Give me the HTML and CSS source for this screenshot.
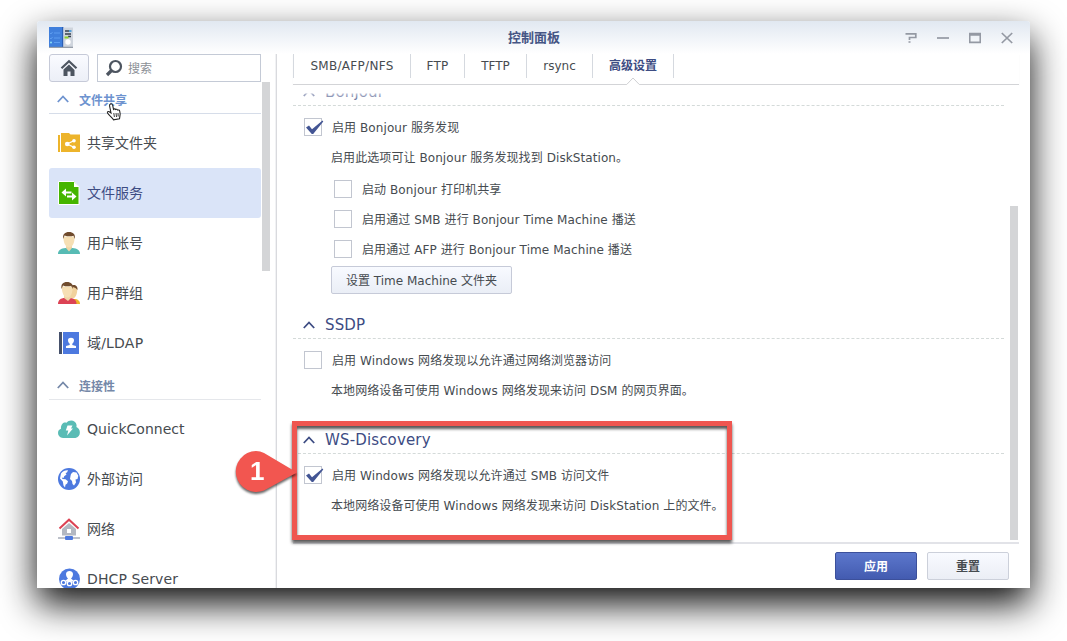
FILE: index.html
```html
<!DOCTYPE html>
<html lang="zh-CN">
<head>
<meta charset="utf-8">
<title>控制面板</title>
<link rel="stylesheet" href="styles.css">
</head>
<body>
<div class="window">
  <header class="titlebar">
    <svg class="app-icon" width="24" height="21" viewBox="0 0 24 21">
      <rect width="14" height="20" fill="#3f7fdc"/><rect x="13" width="1.5" height="20" fill="#2b5fb5"/>
      <rect x="14.5" y=".5" width="9.500" height="19.500" fill="#cfd5dd"/>
      <path d="M1 6l1 1 1.500-2M5 6h6M1 11l1 1 1.500-2M5 11h6M5 15.500h6" stroke="#5d9df0" fill="none"/><circle cx="2" cy="15.500" r="1" fill="#8fe0f5"/>
      <path d="M16 4h4M16 7h6M19 9.500h3" stroke="#35404e" stroke-width="1.300"/><path d="M20 4h2.500" stroke="#2d8ed8" stroke-width="1.500"/><path d="M15.500 10.500h4" stroke="#8ed12b" stroke-width="2"/>
      <circle cx="19" cy="15" r="2.700" fill="#fff"/><path d="M0 20.300h24" stroke="#7d8794"/>
    </svg>
    <h1 class="title">控制面板</h1>
    <div class="controls">
      <svg width="12" height="12" viewBox="0 0 12 12"><path d="M.5 1.800h10.300v3.700H4.500V8M3.500 10h2" /></svg>
      <svg width="12" height="12" viewBox="0 0 12 12"><path d="M0 6h12"/></svg>
      <svg width="12" height="12" viewBox="0 0 12 12"><path d="M.7 1.700h10.600v8.600H.7zM0 3h12"/></svg>
      <svg width="12" height="12" viewBox="0 0 12 12"><path d="M.8 1l10.400 10M11.200 1L.8 11"/></svg>
    </div>
  </header>
  <div class="body">
    <aside class="sidebar">
      <div class="search-row">
        <button class="home"><svg width="18" height="18" viewBox="0 0 18 18"><path d="M1.500 9.300L9 2.300l7.500 7" fill="none" stroke="#4d5560" stroke-width="2.200"/><path d="M3.500 10.500L9 5.500l5.500 5.500V17h-4v-4.500h-3V17h-4z" fill="#4d5560"/></svg></button>
        <div class="search"><svg width="18" height="18" viewBox="0 0 18 18"><circle cx="10.500" cy="7.500" r="5.500" fill="none" stroke="#4d5560" stroke-width="2.200"/><path d="M6.500 11.500L2 16" stroke="#4d5560" stroke-width="3.200"/></svg><span class="lift">搜索</span></div>
      </div>
      <div class="nav-wrap">
        <nav class="nav">
          <h2 class="group group-hover"><svg class="chev" width="12" height="8" viewBox="0 0 12 8"><path d="M.8 7L6 1.500 11.200 7"/></svg>文件共享</h2>
          <a class="item"><svg width="22" height="22" viewBox="0 0 22 22"><path d="M0 3h2v17H0zM3 1h8l1.500 1.500H22V20H3z" fill="#edb42b"/><path d="M16.500 8.500l-7.500 3.500L16.500 15.500" fill="none" stroke="#fff" stroke-width="1.300"/><g fill="#fff"><circle cx="16" cy="8.700" r="1.800"/><circle cx="9.200" cy="12" r="2.300"/><circle cx="16" cy="15.300" r="1.800"/></g></svg><span class="lift">共享文件夹</span></a>
          <a class="item active"><svg width="22" height="24" viewBox="0 0 22 24"><path d="M.5.500h15.500l5 5.500v17.500H.5z" fill="#45b500" stroke="#fff"/><path d="M16 1v5h5z" fill="#fff"/><path d="M3.500 11.500L8 7.500v3h5.500v2H8v3zM18.500 15.500L14 11.500v3H9v2h5v3z" fill="#fff"/></svg><span class="lift">文件服务</span></a>
          <a class="item"><svg width="22" height="22" viewBox="0 0 22 22"><path d="M0 22c0-4 3-5.500 7.500-6h7c4.500.5 7.500 2 7.500 6z" fill="#57bbb4"/><path d="M8 12h6v4l-3 3.500L8 16z" fill="#efd5a6"/><path d="M5.500 4.500h11c.4 6-2 11-5.500 11s-5.900-5-5.500-11z" fill="#f6dfb4"/><path d="M5.200 7C4.500 2 7 0 11 0s6.600 2 5.800 7l-1.300-3.300c-3 1-6 .8-9-.2z" fill="#704b2d"/></svg><span class="lift">用户帐号</span></a>
          <a class="item"><svg width="22" height="22" viewBox="0 0 22 22"><path d="M16 22v-5c4 0 6 2 6 5z" fill="#edb42b"/><path d="M13 5h6c1 5-1 10-3 11h-3z" fill="#f1d29d"/><path d="M12 4c4-2 8-1 7.500 4l-2-2z" fill="#704b2d"/><path d="M0 22c0-4 3-6 6.500-6h6c3.500.5 6 2 6 6z" fill="#dc4254"/><path d="M6 12h7v4l-3 3-4-3z" fill="#efd5a6"/><path d="M4 4.500h10.500c.4 6-1.600 11-5.200 11S3.600 10.500 4 4.500z" fill="#f6dfb4"/><path d="M3.500 7C2.800 2 5 0 9 0s6.500 2 5.700 7l-1.400-3.300c-2.800 1-5.700.8-8.300-.2z" fill="#704b2d"/></svg><span class="lift">用户群组</span></a>
          <a class="item"><svg width="22" height="22" viewBox="0 0 22 22"><path d="M1 0h3v22H1z" fill="#46516b"/><path d="M5 0h16v22H5z" fill="#4d79df"/><path d="M10 8c0-3 6-3 6 0 0 2-.7 3-1.700 3.700V13l3.700 1v2H8v-2l3.700-1v-1.300C10.700 11 10 10 10 8z" fill="#fff"/></svg><span class="lift ls">域/LDAP</span></a>
          <h2 class="group"><svg class="chev" width="12" height="8" viewBox="0 0 12 8"><path d="M.8 7L6 1.500 11.200 7"/></svg>连接性</h2>
          <a class="item"><svg width="22" height="22" viewBox="0 0 22 22"><path d="M5 20c-6-.5-6.500-8-2-9.300C2.500 6 6 3.500 8.500 4.700c3-4 9.500-2.500 10 2 .2 1 0 1.600-.1 2.300 5 2 4.500 10.500-1 11z" fill="#5abcb5"/><path d="M9.500 7.500h5l-1.500 3h2L9 17.500l1.300-5H7.800z" fill="#fff"/></svg>QuickConnect</a>
          <a class="item"><svg width="22" height="22" viewBox="0 0 22 22"><circle cx="11" cy="11" r="11" fill="#4d79df"/><path d="M3 5.500C5 3 7.500 2 10 2.300L9 4.500 7.500 5l1 1.500-2.300 1.800L5.500 10 3.800 9.500l.7 1.500 3 .3 2.500 2-.8 2.200-1.700 1.300L7 19.500l-1.500-2-.7-4L2 10.500zM13 6l2-2 3.500.5 1.800 3.200L19.500 11l-2 .5.5 3-2 3-1.500-1.500-.5-3-2-2 .5-3z" fill="#fff"/></svg><span class="lift">外部访问</span></a>
          <a class="item"><svg width="22" height="22" viewBox="0 0 22 22"><path d="M4 11l7-6 7 6v6.500H4z" fill="#b3b8c2"/><path d="M1.500 10.500L11 1.700l9.500 8.800" fill="none" stroke="#dc4254" stroke-width="2"/><path d="M9 11h4v4H9z" fill="#fff"/><path d="M0 20h22" stroke="#a7adb8" stroke-width="1.500"/><rect x="7" y="18" width="8" height="4" rx="1" fill="#4d79df"/></svg><span class="lift">网络</span></a>
          <a class="item"><svg width="22" height="22" viewBox="0 0 22 22"><circle cx="11.500" cy="11" r="10.500" fill="#4d79df"/><path d="M8 6c0-4 7-4 7 0 0 2-1 4-2 4.500L16 13H7l3-2.500C9 10 8 8 8 6z" fill="#fff"/><path d="M11.500 9v4L5 15m6.500-2l6.500 2" stroke="#fff" fill="none"/><g fill="#4d79df" stroke="#fff" stroke-width="1.300"><circle cx="5.500" cy="14.500" r="2.200"/><circle cx="11.500" cy="15.500" r="2.200"/><circle cx="17.500" cy="14.500" r="2.200"/></g></svg><span class="dhcp">DHCP Server</span></a>
        </nav>
        <div class="nav-thumb"></div>
      </div>
    </aside>
    <main class="main">
      <div class="tabs">
        <a class="tab tab-smb">SMB/AFP/NFS</a><a class="tab tab-ftp">FTP</a><a class="tab tab-tftp">TFTP</a><a class="tab tab-rsync">rsync</a><a class="tab tab-adv">高级设置<svg class="notch" width="14" height="8" viewBox="0 0 14 8"><path d="M0 8V7.500L7 .8l7 6.700V8z" fill="#fff"/><path d="M0 7.500h.7L7 1l6.300 6.500h.7" fill="none" stroke="#cfd0d3"/></svg></a>
      </div>
      <div class="content">
        <div class="panel">
          <h3 class="section first"><svg class="chev" width="12" height="8" viewBox="0 0 12 8"><path d="M.8 7L6 1.500 11.200 7"/></svg>Bonjour</h3>
          <label class="row"><span class="box"><svg width="22" height="18" viewBox="0 0 22 18"><path class="tick" d="M1 8.500l3-2 3 3.700L17.500 1.500l.8 1L8.200 15H6.800z"/></svg></span><span class="lift">启用 Bonjour 服务发现</span></label>
          <p class="desc">启用此选项可让 Bonjour 服务发现找到 DiskStation。</p>
          <div class="nested">
            <label class="row sub"><span class="box"></span><span class="lift">启动 Bonjour 打印机共享</span></label>
            <label class="row sub"><span class="box"></span><span class="lift">启用通过 SMB 进行 Bonjour Time Machine 播送</span></label>
            <label class="row sub"><span class="box"></span><span class="lift">启用通过 AFP 进行 Bonjour Time Machine 播送</span></label>
          </div>
          <button class="tm-btn">设置 Time Machine 文件夹</button>
          <h3 class="section ssdp"><svg class="chev" width="12" height="8" viewBox="0 0 12 8"><path d="M.8 7L6 1.500 11.200 7"/></svg>SSDP</h3>
          <label class="row"><span class="box"></span><span class="lift">启用 Windows 网络发现以允许通过网络浏览器访问</span></label>
          <p class="desc">本地网络设备可使用 Windows 网络发现来访问 DSM 的网页界面。</p>
          <h3 class="section wsd"><svg class="chev" width="12" height="8" viewBox="0 0 12 8"><path d="M.8 7L6 1.500 11.200 7"/></svg>WS-Discovery</h3>
          <label class="row"><span class="box"><svg width="22" height="18" viewBox="0 0 22 18"><path class="tick" d="M1 8.500l3-2 3 3.700L17.500 1.500l.8 1L8.200 15H6.800z"/></svg></span><span class="lift">启用 Windows 网络发现以允许通过 SMB 访问文件</span></label>
          <p class="desc">本地网络设备可使用 Windows 网络发现来访问 DiskStation 上的文件。</p>
        </div>
        <div class="main-thumb"></div>
      </div>
      <footer class="footer"><button class="btn primary">应用</button><button class="btn">重置</button></footer>
    </main>
  </div>
</div>
<div class="highlight"></div>
<div class="callout"><svg width="64" height="44" viewBox="0 0 64 44"><path d="M21 1a20.500 20.500 0 1 0 8 39.500L62 22.500 29 3A20.500 20.500 0 0 0 21 1z" fill="#f25650"/></svg><span class="num">1</span></div>
<svg class="cursor" width="17" height="18" viewBox="0 0 17 18"><path d="M4.500 1c1.200-.5 2 .3 2.200 1.300l.8 4c.6-.7 1.700-.6 2.100.2.700-.5 1.700-.3 2 .6.900-.4 1.900.1 2.100 1 .6 2.200.6 3.700.2 5l-.4 2.700-6 1C6.500 14.500 3 12.500 1.500 10c-.4-1 .6-2 1.800-1.200L5 10 3.600 3c-.2-.8.200-1.700.9-2z" fill="#fff" stroke="#222" stroke-width="1.100"/><path d="M7.800 10l.6 4M10 10l.5 4M12 10l.2 3.500" stroke="#222" stroke-width=".9"/></svg>
</body>
</html>
```
FILE: styles.css
```css
* { box-sizing: border-box; }
body { margin: 0; width: 1067px; height: 641px; overflow: hidden; background: #fff; position: relative;
  font: 12px "DejaVu Sans", "Noto Sans CJK SC", sans-serif; color: #464b50; }
h1, h2, h3, p { margin: 0; font-weight: normal; }
button { font: inherit; color: inherit; padding: 0; }
svg { flex: none; display: block; }

.window { margin: 21px 0 0 37px; width: 993px; height: 567px; background: #fff; display: flex; flex-direction: column;
  border-radius: 3px 3px 0 0; box-shadow: 0 16px 36px rgba(0,0,0,.95); }
.titlebar { height: 33px; flex: none; display: flex; align-items: center; padding: 0 17px 0 12px;
  background: linear-gradient(#e1e8f1, #fff); border-radius: 3px 3px 0 0; }
.title { flex: 1; text-align: center; font-size: 13px; font-weight: bold; color: #465685; padding: 0 0 2px 90px; font-family: "Noto Sans CJK SC", sans-serif; }
.controls { display: flex; gap: 20px; }
.controls path { fill: none; stroke: #9499a3; stroke-width: 1.7; }

.body { flex: 1; min-height: 0; display: flex; }
.sidebar { width: 240px; flex: none; padding-left: 12px; display: flex; flex-direction: column; border-right: 1px solid #d9dade; box-shadow: inset -1px 0 #f1f2f4; }
.search-row { display: flex; gap: 8px; height: 28px; flex: none; }
.home { width: 40px; height: 28px; border: 1px solid #c6cad8; border-radius: 3px; background: linear-gradient(#fafbff, #eceff7); display: flex; align-items: center; justify-content: center; }
.search { width: 164px; height: 28px; border: 1px solid #c4cad6; display: flex; align-items: center; gap: 5px; padding-left: 7px; color: #8c9096; }
.lift { padding-bottom: 2px; }
.ls { letter-spacing: .2px; }
.dhcp { letter-spacing: .1px; }
.nav-wrap { flex: 1; min-height: 0; display: flex; gap: 1px; }
.nav { width: 212px; overflow: hidden; }
.nav-thumb { width: 8px; height: 189px; background: #d4d5d7; }
.group { height: 32px; margin-bottom: 4px; display: flex; align-items: center; gap: 10px; padding: 3px 0 0 8px;
  font-size: 12px; font-weight: bold; color: #7588a8; border-bottom: 1px solid #e5e7eb; }
.group-hover { color: #6e93cf; border-bottom-color: #d6dde9; }
.chev path { fill: none; stroke: currentColor; stroke-width: 1.8; }
.item { height: 50px; display: flex; align-items: center; gap: 7px; padding-left: 9px; font-size: 14px; border-radius: 3px; }
.item.active { background: #dae4f8; color: #3d4c83; }

.main { flex: 1; min-width: 0; display: flex; flex-direction: column; padding: 0 11px 0 16px; }
.tabs { height: 31px; flex: none; display: flex; border-bottom: 1px solid #d3d4d7; box-shadow: 0 1px 1px #f0f0f2; }
.tab { height: 24px; line-height: 24px; text-align: center; border-left: 1px solid #d5d9df; letter-spacing: .3px; }
.tab-smb { width: 117px; }
.tab-ftp { width: 54px; }
.tab-tftp { width: 62px; letter-spacing: 0; }
.tab-rsync { width: 66px; letter-spacing: 0; }
.tab-adv { width: 82px; border-right: 1px solid #d5d9df; font-weight: bold; color: #3d4c83; letter-spacing: 0; position: relative; }
.notch { position: absolute; left: 33px; top: 23px; }

.content { flex: 1; min-height: 0; overflow: hidden; position: relative; display: flex; }
.content::before { content: ""; position: absolute; left: 0; right: 0; top: 0; height: 16px; z-index: 1;
  background: linear-gradient(#fff 8px, rgba(255,255,255,.6) 9px, rgba(255,255,255,.1)); }
.panel { width: 711px; }
.main-thumb { width: 8px; height: 334px; margin: 121px 0 0 6px; background: #d4d5d7; }
.section { height: 29px; display: flex; align-items: center; gap: 10px; padding: 2px 0 0 10px; margin-bottom: 6px;
  font-size: 15px; letter-spacing: .15px; color: #3d4c83; border-bottom: 1px dashed #d4dad9; }
.section.first { margin-top: 0; height: 21px; line-height: 15px; align-items: flex-start; padding-top: 0; }
.section.first .chev { margin-top: 4px; }
.ssdp { margin-top: 16px; }
.wsd { margin-top: 19px; }
.row { height: 30px; display: flex; align-items: center; gap: 10px; padding-left: 11px; letter-spacing: .08px; }
.box { width: 18px; height: 18px; border: 1px solid #c2c6d0; background: #fff; flex: none; }
.tick { fill: #435594; }
.desc { height: 31px; line-height: 33px; padding-left: 38px; letter-spacing: .08px; }
.nested { padding: 1px 0 2px 30px; }
.tm-btn { display: block; margin-left: 38px; width: 181px; height: 28px; border: 1px solid #c6cad8; border-radius: 2px;
  background: linear-gradient(#f8faff, #eaeef6); padding-bottom: 2px; }
.footer { height: 46px; flex: none; display: flex; justify-content: flex-end; gap: 10px; padding: 8px 10px 0 0;
  border-top: 2px solid #e2e3e8; }
.btn { width: 82px; height: 28px; padding-bottom: 1px; border: 1px solid #ccd0da; border-radius: 2px; background: linear-gradient(#f8faff, #ebeef5); font-weight: bold; }
.primary { background: linear-gradient(#5c77cc, #435bb0); border-color: #3c509b; color: #fff; }

.highlight { position: absolute; left: 292px; top: 421px; width: 440px; height: 119px; border: 5px solid #ef5650;
  box-shadow: 0 3px 3px rgba(0,0,0,.65), inset 0 3px 3px rgba(0,0,0,.65); }
.callout { position: absolute; left: 235px; top: 450px; filter: drop-shadow(0 2px 1px rgba(0,0,0,.6)); }
.num { position: absolute; left: 15px; top: 6px; font: bold 26px/30px "Liberation Sans", sans-serif; color: #fff; }
.cursor { position: absolute; left: 106px; top: 103px; }
```
